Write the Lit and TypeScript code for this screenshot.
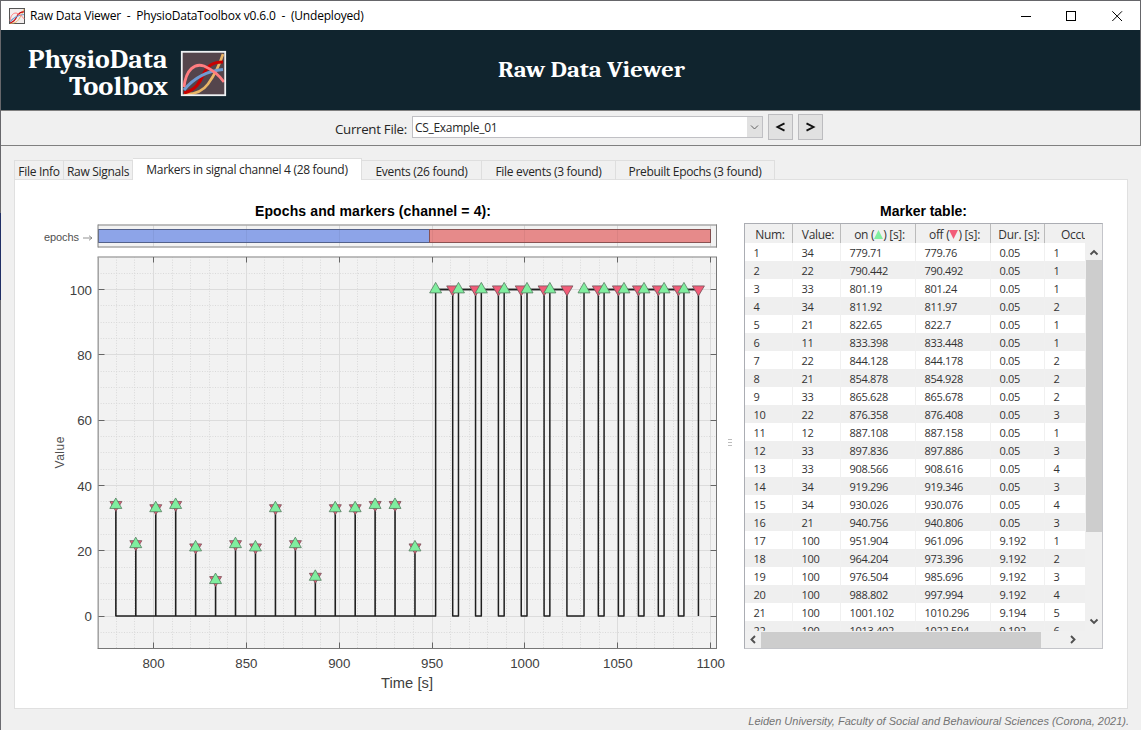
import { LitElement, html, svg, css } from "lit";
import { customElement, property } from "lit/decorators.js";

interface Marker { value: number; on: number; off: number; dur: string; occ: number }

const m = (value: number, on: number, off: number, occ: number, dur = "0.05"): Marker => ({ value, on, off, dur, occ });

const MARKERS: Marker[] = [
  m(34, 779.71, 779.76, 1),
  m(22, 790.442, 790.492, 1),
  m(33, 801.19, 801.24, 1),
  m(34, 811.92, 811.97, 2),
  m(21, 822.65, 822.7, 1),
  m(11, 833.398, 833.448, 1),
  m(22, 844.128, 844.178, 2),
  m(21, 854.878, 854.928, 2),
  m(33, 865.628, 865.678, 2),
  m(22, 876.358, 876.408, 3),
  m(12, 887.108, 887.158, 1),
  m(33, 897.836, 897.886, 3),
  m(33, 908.566, 908.616, 4),
  m(34, 919.296, 919.346, 3),
  m(34, 930.026, 930.076, 4),
  m(21, 940.756, 940.806, 3),
  m(100, 951.904, 961.096, 1, "9.192"),
  m(100, 964.204, 973.396, 2, "9.192"),
  m(100, 976.504, 985.696, 3, "9.192"),
  m(100, 988.802, 997.994, 4, "9.192"),
  m(100, 1001.102, 1010.296, 5, "9.194"),
  m(100, 1013.402, 1022.594, 6, "9.192"),
  m(100, 1031.8, 1039.5, 7, "7.7"),
  m(100, 1042.6, 1050.3, 8, "7.7"),
  m(100, 1053.3, 1061.1, 9, "7.7"),
  m(100, 1064.1, 1071.8, 10, "7.7"),
  m(100, 1074.9, 1082.6, 11, "7.7"),
  m(100, 1085.6, 1093.4, 12, "7.7"),
];

const logoCurves = svg`
  <path d="M3 43 Q19 44 27 33 Q37 19 42 3" stroke="#e9b566" stroke-width="2.6"/>
  <path d="M3 42 C15 39 19 31 22 24 C27 14 32 11 42 11" stroke="#c80000" stroke-width="3.2"/>
  <path d="M3 39 C12 28 26 20 42 18.5" stroke="#6f9bd1" stroke-width="3"/>
  <path d="M3 36 C5 18 14 12 23 15 C32 19 38 24 43 31" stroke="#ff7d80" stroke-width="2.8"/>`;

@customElement("signal-chart")
class SignalChart extends LitElement {
  static styles = css`
    :host { display: block; font-family: "Liberation Sans", Arial, sans-serif; }
    svg { display: block; }
    .title { font-size: 14px; font-weight: bold; fill: #000; }
    .tick { font-size: 13.3px; fill: #404040; }
    .label { font-size: 14.7px; fill: #404040; }
    .small { font-size: 11px; fill: #505050; }
  `;

  render() {
    const X = (t: number) => 153.5 + (t - 800) * 1.8573;
    const Y = (v: number) => 616 - v * 3.266;
    const range = (a: number, b: number, s: number) => {
      const out: number[] = [];
      for (let i = a; i <= b; i += s) out.push(i);
      return out;
    };
    const xMajor = range(800, 1100, 50), yMajor = range(0, 100, 20);
    const xMinor = range(780, 1090, 10).filter((t) => t % 50), yMinor = range(-5, 105, 5).filter((v) => v % 20);
    const snap = (n: number) => Math.round(n - 0.5) + 0.5;
    let trace = `M${X(MARKERS[0].on)} ${Y(0)}`;
    for (const k of MARKERS) trace += `H${X(k.on)}V${Y(k.value)}H${X(k.off)}V${Y(0)}`;
    const highs = MARKERS.filter((k) => k.value === 100);
    const up = (x: number, y: number) => `M${x} ${y - 7}L${x + 6} ${y + 3.5}H${x - 6}Z`;
    const down = (x: number, y: number) => `M${x} ${y + 6.5}L${x + 6} ${y - 3.5}H${x - 6}Z`;
    return html`<svg width="700" height="510" viewBox="40 190 700 510">
      <text class="title" x="255" y="216" textLength="236">Epochs and markers (channel = 4):</text>
      <text class="small" x="44" y="241" textLength="35">epochs</text>
      <path d="M83 238H92M89 235.7L92 238L89 240.3" fill="none" stroke="#777" stroke-width=".8"/>

      <rect x="98" y="225" width="618.5" height="22" fill="#f2f2f2"/>
      ${xMajor.map((t) => svg`<path d="M${snap(X(t))} 225V247" stroke="#d9d9d9"/>`)}
      <rect x="98.5" y="229.5" width="331" height="13" fill="#8da4e8" stroke="#53618a"/>
      <rect x="429.5" y="229.5" width="281" height="13" fill="#e68a8a" stroke="#895252"/>
      ${xMajor.map((t) => svg`<path d="M${snap(X(t))} 230V242" stroke="#000" stroke-opacity=".05"/>`)}
      <path d="M98 225H717M98 247H717" stroke="#a9a9a9" stroke-width="1.6"/>
      <path d="M98 224.5V247.5M716.5 224.5V247.5" stroke="#808080"/>

      <rect x="98" y="257" width="618.5" height="391.5" fill="#f2f2f2"/>
      <g stroke="#d9d9d9" stroke-dasharray="1 1.6">
        ${xMinor.map((t) => svg`<path d="M${snap(X(t))} 257V648"/>`)}
        ${yMinor.map((v) => svg`<path d="M98 ${snap(Y(v))}H716"/>`)}
      </g>
      <g stroke="#dcdcdc">
        ${xMajor.map((t) => svg`<path d="M${snap(X(t))} 257V648"/>`)}
        ${yMajor.map((v) => svg`<path d="M98 ${snap(Y(v))}H716"/>`)}
      </g>
      <path d="M97.5 257H717" stroke="#a9a9a9" stroke-width="1.7"/>
      <path d="M98.2 257V648" stroke="#a0a0a0" stroke-width="1.5"/>
      <path d="M97.5 648.5H717M716.5 257V648" stroke="#777"/>
      <g stroke="#666">
        ${xMajor.map((t) => svg`<path d="M${snap(X(t))} 257V262.5M${snap(X(t))} 642.5V648"/>`)}
        ${yMajor.map((v) => svg`<path d="M98.5 ${snap(Y(v))}H104.5M710.5 ${snap(Y(v))}H716.5"/>`)}
      </g>

      <path d=${trace} fill="none" stroke="#1f1f1f" stroke-width="1.5" stroke-linejoin="round"/>
      <path d="M${X(highs[0].on)} ${Y(100)}H${X(highs[5].off)}M${X(highs[6].on)} ${Y(100)}H${X(highs[11].off)}" stroke="#1f1f1f" stroke-width="1.5"/>
      <g fill="#f25c78" stroke="#75545b" stroke-width=".8">
        ${MARKERS.map((k) => svg`<path d=${down(X(k.off), Y(k.value))}/>`)}
      </g>
      <g fill="#80ee9f" stroke="#557b60" stroke-width=".8">
        ${MARKERS.map((k) => svg`<path d=${up(X(k.on), Y(k.value))}/>`)}
      </g>

      <g class="tick" text-anchor="end">
        ${yMajor.map((v) => svg`<text x="92" y=${Y(v) + 5.2}>${v}</text>`)}
      </g>
      <g class="tick" text-anchor="middle">
        ${xMajor.map((t) => svg`<text x=${X(t)} y="668">${t}</text>`)}
      </g>
      <text class="label" x="381" y="688" textLength="52">Time [s]</text>
      <text class="small" transform="translate(63.5 468.5) rotate(-90)" textLength="32" style="font-size:12px">Value</text>
    </svg>`;
  }
}

@customElement("marker-table")
class MarkerTable extends LitElement {
  static styles = css`
    :host { display: block; font-family: "Open Sans", "Noto Sans", sans-serif; color: #333; }
    .title { font: bold 14px/18px "Liberation Sans", Arial, sans-serif; color: #000; text-align: center; margin-bottom: 3px; letter-spacing: -.02px; }
    .frame { box-sizing: border-box; width: 359px; height: 426px; border: 1px solid #abadb3; border-bottom-color: #c4c5ca; border-right-color: #c4c5ca; background: #f0f0f0;
      display: grid; grid-template: 19px 388px 1fr / 340px 1fr; }
    .row, .head { display: grid; grid-template-columns: 48px 48px 75px 75px 54px 90px; overflow: hidden; width: 340px; }
    .head { font-size: 12px; line-height: 19px; letter-spacing: -.3px; border-bottom: 1px solid #c3c3c3; height: 18.5px; }
    .head span { border-right: 1px solid #bbb; text-align: center; white-space: nowrap; padding-top: 1px; padding-left: 3px; }
    .head span:last-child { text-align: left; padding-left: 16px; }
    .tri { display: inline-block; width: 9px; height: 9px; }
    .body { overflow: hidden; background: #fff; }
    .row { height: 18px; font-size: 11px; line-height: 20px; letter-spacing: -.3px; background: #fff; }
    .row:nth-child(even) { background: #efefef; }
    .row span { border-right: 1px solid #f0f0f0; padding-left: 8.5px; }
    .vbar { display: flex; flex-direction: column; align-items: center; }
    .vthumb { width: 16px; height: 272px; background: #cdcdcd; }
    .arrow { width: 16px; height: 17px; display: block; }
    .vbar .grow { flex: 1; }
    .hbar { grid-column: 1 / 3; display: flex; align-items: center; }
    .hthumb { width: 280px; height: 16px; background: #cdcdcd; margin-right: 23px; }
  `;

  arrow(d: string) {
    return html`<svg class="arrow" viewBox="0 0 16 17"><path d=${d} fill="none" stroke="#505050" stroke-width="1.9"/></svg>`;
  }

  render() {
    return html`
      <div class="title">Marker table:</div>
      <div class="frame">
        <div class="head">
          <span>Num:</span><span>Value:</span>
          <span>on (<svg class="tri" viewBox="0 0 9 9"><path d="M4.5 0L9 9H0Z" fill="#80ee9f"/></svg>) [s]:</span>
          <span>off (<svg class="tri" viewBox="0 0 9 9"><path d="M4.5 9L9 0H0Z" fill="#f25c78"/></svg>) [s]:</span>
          <span>Dur. [s]:</span><span>Occurrence:</span>
        </div>
        <div></div>
        <div class="body">
          ${MARKERS.slice(0, 22).map((k, i) => html`<div class="row">
            <span>${i + 1}</span><span>${k.value}</span><span>${k.on}</span><span>${k.off}</span><span>${k.dur}</span><span>${k.occ}</span>
          </div>`)}
        </div>
        <div class="vbar">
          ${this.arrow("M4.5 11.5L8 8L11.5 11.5")}
          <div class="vthumb"></div><div class="grow"></div>
          ${this.arrow("M4.5 5.5L8 9L11.5 5.5")}
        </div>
        <div class="hbar">
          ${this.arrow("M10 5L6.5 8.5L10 12")}
          <div class="hthumb"></div>
          ${this.arrow("M7 5L10.5 8.5L7 12")}
        </div>
      </div>`;
  }
}

@customElement("app-root")
class AppRoot extends LitElement {
  @property({ type: Number }) active = 2;

  static styles = css`
    :host { display: block; width: 1141px; height: 730px; overflow: hidden; background: #f0f0f0; color: #262626; font-family: "Open Sans", "Noto Sans", sans-serif; }
    .window { box-sizing: border-box; height: 730px; display: flex; border-top: 1px solid #66666a; }
    .edge { width: 1px; background: linear-gradient(#67676b 0 212px, #202f66 212px 299px, #6b6b70 299px); }
    .main { width: 1140px; display: flex; flex-direction: column; }
    .titlebar { height: 29px; background: #fff; display: flex; align-items: center; padding-left: 8px; color: #000; font-size: 12px; border-right: 1px solid #66666a; }
    .caption { flex: 1; white-space: pre; padding-left: 5px; letter-spacing: -.19px; line-height: 28px; }
    .titlebar svg { display: block; }
    .banner { box-sizing: border-box; height: 80px; background: #10242e; border-right: 1px solid #66666a; }
    .banner svg { display: block; }
    .brand { font-family: Cambria, Caladea, "Noto Serif", "DejaVu Serif Condensed", "DejaVu Serif", serif; font-weight: bold; fill: #fff; }
    .filebar { box-sizing: border-box; height: 36px; border: 1px solid #808080; border-left: 0; display: flex; align-items: center; padding: 0 0 2px 334px; }
    .filebar .lbl { width: 77px; font-size: 13.3px; letter-spacing: -.3px; padding-top: 3px; }
    .combo { box-sizing: border-box; width: 351px; height: 22px; border: 1px solid #c0c0c4; background: #fff; display: flex; font-size: 12px; line-height: 21px; letter-spacing: -.3px; }
    .combo span { flex: 1; padding-left: 2px; }
    .combo svg { background: #e1e1e1; display: block; }
    .nav { box-sizing: border-box; width: 25px; height: 26px; border: 1px solid #bcbcbf; background: #e1e1e1; margin-left: 5px; display: block; }
    .tabs { height: 22px; margin: 12px 0 0 13px; display: flex; align-items: flex-end; }
    .tab { box-sizing: border-box; height: 20px; border: 1px solid #dedede; border-width: 1px 1px 0 0; font-size: 12px; line-height: 21px; letter-spacing: -.3px; text-align: center; white-space: nowrap; }
    .tab:first-child { border-left-width: 1px; }
    .tab.active { height: 22px; background: #fff; line-height: 21px; }
    .panel { box-sizing: border-box; width: 1114px; height: 530px; margin-left: 13px; margin-top: -1px; border: 1px solid #e0e0e0; background: #fff; display: flex; padding: 10px 0 0 25px; }
    .tabs { position: relative; z-index: 1; }
    .grip { width: 4px; margin: 248px 12px 0 -12px; }
    .tablebox { padding-top: 12px; width: 359px; }
    .foot { font: italic 11px/18px "Liberation Sans", Arial, sans-serif; color: #737373; text-align: right; padding: 3px 12px 0 0; }
  `;

  tabs: [string, number][] = [
    ["File Info", 50], ["Raw Signals", 69], ["Markers in signal channel 4 (28 found)", 229],
    ["Events (26 found)", 120], ["File events (3 found)", 134], ["Prebuilt Epochs (3 found)", 159],
  ];

  render() {
    return html`<div class="window">
      <div class="edge"></div>
      <div class="main">
        <div class="titlebar">
          <svg width="16" height="16" viewBox="0 0 45 45" fill="none"><rect x="1.4" y="1.4" width="42.2" height="42.2" fill="#f3eeee" stroke="#555" stroke-width="2.8"/>${logoCurves}</svg>
          <div class="caption">Raw Data Viewer  -  PhysioDataToolbox v0.6.0  -  (Undeployed)</div>
          <svg width="120" height="28" viewBox="0 0 120 28" fill="none" stroke="#000">
            <path d="M1 14.5H11"/><rect x="46.5" y="9.5" width="9" height="9"/><path d="M92.3 9.3L102 19M102 9.3L92.3 19"/>
          </svg>
        </div>
        <div class="banner">
          <svg width="800" height="80" viewBox="1 30 800 80">
            <text class="brand" x="28" y="68.2" font-size="26" textLength="139.5" lengthAdjust="spacingAndGlyphs">PhysioData</text>
            <text class="brand" x="69" y="95.4" font-size="26" textLength="99" lengthAdjust="spacingAndGlyphs">Toolbox</text>
            <text class="brand" x="498" y="77.3" font-size="21.5" textLength="187" lengthAdjust="spacingAndGlyphs">Raw Data Viewer</text>
            <g transform="translate(181 51)" fill="none"><rect width="45" height="45" fill="#54454c"/>${logoCurves}<rect x=".8" y=".8" width="43.4" height="43.4" stroke="#eef1f3" stroke-width="1.8"/></g>
          </svg>
        </div>
        <div class="filebar">
          <div class="lbl">Current File:</div>
          <div class="combo"><span>CS_Example_01</span><svg width="15" height="20" viewBox="0 0 15 20"><path d="M4 8.5L7.5 12L11 8.5" fill="none" stroke="#606060"/></svg></div>
          <svg class="nav" viewBox="0 0 23 24"><path d="M15.5 8.4L8.5 12L15.5 15.6" fill="none" stroke="#111" stroke-width="1.9"/></svg>
          <svg class="nav" viewBox="0 0 23 24"><path d="M7.5 8.4L14.5 12L7.5 15.6" fill="none" stroke="#111" stroke-width="1.9"/></svg>
        </div>
        <div class="tabs">
          ${this.tabs.map(([t, w], i) => html`<div class="tab ${i === this.active ? "active" : ""}" style="width:${w}px">${t}</div>`)}
        </div>
        <div class="panel">
          <signal-chart></signal-chart>
          <svg class="grip" width="4" height="12" viewBox="0 0 4 12"><path d="M0 1.5H4M0 4.5H4M0 7.5H4" stroke="#bdbdbd"/></svg>
          <div class="tablebox"><marker-table></marker-table></div>
        </div>
        <div class="foot">Leiden University, Faculty of Social and Behavioural Sciences (Corona, 2021).</div>
      </div>
    </div>`;
  }
}
